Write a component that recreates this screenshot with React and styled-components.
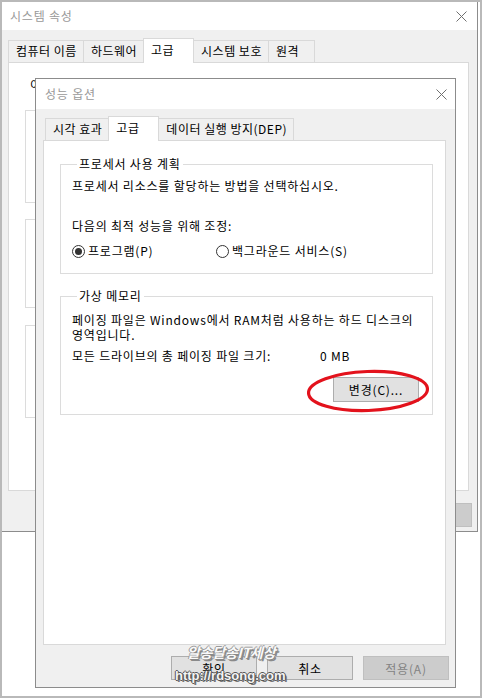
import styled, { createGlobalStyle, css } from 'styled-components'

const GlobalStyle = createGlobalStyle`
  html, body { margin:0; padding:0; background:#fff; }
  body {
    font-family:"Noto Sans CJK KR","Noto Sans",sans-serif;
    font-size:12px;
    letter-spacing:0.8px;
    color:#000;
  }
`

const Desktop = styled.div`
  position:relative;
  width:482px;
  height:698px;
  box-sizing:border-box;
  border:2px solid #b9b9b9;
  background:#fff;
  overflow:hidden;
`

const Window = styled.div`
  box-sizing:border-box;
  display:flex;
  flex-direction:column;
  background:#f0f0f0;
  width:${p => p.$w}px;
  height:${p => p.$h}px;

  ${p => p.$front ? css`
    position:absolute;
    left:33px;
    top:76px;
    border:1px solid #8c8c8c;
  ` : css`
    border-right:1px solid #8c8c8c;
    border-bottom:1px solid #8c8c8c;
  `}
`

const TitleBar = styled.div`
  flex-shrink:0;
  height:${p => p.$h}px;
  background:#fff;
  display:flex;
  align-items:center;
  justify-content:space-between;
  padding:0 ${p => p.$pr}px 0 ${p => p.$pl}px;
  color:#999;
  font-size:12px;
  line-height:16px;
`

const TabArea = styled.div`
  display:flex;
  flex-direction:column;
  padding:${p => p.$pad};
`

const TabStrip = styled.div`
  display:flex;
  align-items:flex-end;
  height:24px;
  padding-left:${p => p.$inset || 0}px;
`

const Tab = styled.div`
  box-sizing:border-box;
  height:22px;
  min-width:47px;
  padding:0 6px 0 7px;
  margin-left:-1px;
  border:1px solid #d9d9d9;
  border-bottom:none;
  background:#f0f0f0;
  line-height:20px;
  letter-spacing:0.5px;
  white-space:nowrap;
  &:first-child { margin-left:0; }

  ${p => p.$active && css`
    position:relative;
    z-index:1;
    height:25px;
    min-width:51px;
    background:#fff;
    margin-bottom:-1px;
    line-height:22px;
  `}
`

const Panel = styled.div`
  box-sizing:border-box;
  background:#fff;
  border:1px solid #d9d9d9;
  width:${p => p.$w}px;
  height:${p => p.$h}px;
  padding:${p => p.$pad};
  display:flex;
  flex-direction:column;
`

const Group = styled.fieldset`
  margin:${p => p.$mt || 0}px 0 0 0;
  padding:0 11px 0 11px;
  border:1px solid #dcdcdc;
  min-width:0;
  ${p => p.$h && css`height:${p.$h}px; box-sizing:border-box;`}

  legend {
    padding:0 2px;
    margin-left:5px;
    line-height:16px;
    font-size:12px;
    white-space:nowrap;
  }
`

const Text = styled.p`
  margin:${p => p.$mt || 0}px 0 0 ${p => p.$ml || 0}px;
  line-height:${p => p.$lh || 16}px;
  white-space:nowrap;
`

const RadioRow = styled.div`
  display:grid;
  grid-template-columns:144px auto;
  margin-top:9px;
  height:16px;
  padding-bottom:14px;
`

const RadioItem = styled.label`
  display:flex;
  align-items:center;
  gap:3px;
  line-height:16px;
`

const RadioDot = styled.span`
  box-sizing:border-box;
  width:13px;
  height:13px;
  border-radius:50%;
  border:1px solid #333;
  display:flex;
  align-items:center;
  justify-content:center;

  &::after {
    content:'';
    width:7px;
    height:7px;
    border-radius:50%;
    background:${p => p.$checked ? '#333' : 'transparent'};
  }
`

const SizeRow = styled.div`
  display:flex;
  margin-top:6px;
  line-height:16px;

  span:first-child { width:248px; }
`

const ActionLine = styled.div`
  display:flex;
  justify-content:flex-end;
  margin:13px 2px 0 0;
  padding-bottom:12px;
`

const Marked = styled.span`
  position:relative;
  display:inline-flex;

  svg {
    position:absolute;
    left:-27px;
    top:-8px;
    pointer-events:none;
  }
`

const Button = styled.button`
  box-sizing:border-box;
  width:86px;
  height:${p => p.$h || 24}px;
  padding:0;
  font-family:"Noto Sans CJK KR","Noto Sans",sans-serif;
  font-size:12px;
  letter-spacing:0.8px;
  color:#000;
  background:#e1e1e1;
  border:1px solid #adadad;

  &:disabled {
    background:#cccccc;
    border-color:#bfbfbf;
    color:#838383;
  }
`

const ButtonRow = styled.div`
  display:flex;
  justify-content:flex-end;
  gap:${p => p.$gap || 9}px;
  padding:${p => p.$pad};
`

const Watermark = styled.div`
  position:absolute;
  left:171px;
  top:641px;
  display:flex;
  flex-direction:column;
  pointer-events:none;
  letter-spacing:0;
`

const MarkTitle = styled.span`
  margin-left:14px;
  font-size:14px;
  font-weight:700;
  font-style:italic;
  line-height:18px;
  color:#fafafa;
  letter-spacing:-0.3px;
  text-shadow:
    1px 1px 0 #8a8a8a, 2px 2px 0 #8a8a8a, -1px 0 0 #9a9a9a, 0 -1px 0 #9a9a9a;
`

const MarkUrl = styled.span`
  margin-top:7px;
  margin-left:2px;
  font-family:"Liberation Sans",Arial,sans-serif;
  font-size:13px;
  font-weight:700;
  line-height:15px;
  color:#f4f4f4;
  text-shadow:
    1px 0 0 #555, -1px 0 0 #555, 0 1px 0 #555, 0 -1px 0 #555,
    2px 2px 0 #777;
`

function CloseIcon() {
  return (
    <svg width="11" height="11" viewBox="0 0 11 11">
      <path d="M0.5 0.5L10.5 10.5M10.5 0.5L0.5 10.5" stroke="#6f6f6f" strokeWidth="1" fill="none" />
    </svg>
  )
}

function SystemProperties() {
  return (
    <Window $w={476} $h={530}>
      <TitleBar $h={28} $pl={8} $pr={10}>
        <span>시스템 속성</span>
        <CloseIcon />
      </TitleBar>
      <TabArea $pad="8px 0 0 6px">
        <TabStrip>
          <Tab>컴퓨터 이름</Tab>
          <Tab>하드웨어</Tab>
          <Tab $active>고급</Tab>
          <Tab>시스템 보호</Tab>
          <Tab>원격</Tab>
        </TabStrip>
        <Panel $w={461} $h={429} $pad="14px 15px 0 16px">
          <Text $ml={5}>이 변경 내용의 대부분을 적용하려면 관리자로 로그온해야 합니다.</Text>
          <Group $mt={9} $h={101}>
            <legend>성능</legend>
            <Text $mt={6}>시각 효과, 프로세서 일정, 메모리 사용 및 가상 메모리</Text>
          </Group>
          <Group $mt={8} $h={97}>
            <legend>사용자 프로필</legend>
            <Text $mt={6}>로그인에 관련된 바탕 화면 설정</Text>
          </Group>
          <Group $mt={9} $h={101}>
            <legend>시작 및 복구</legend>
            <Text $mt={6}>시스템 시작, 시스템 오류 및 디버깅 정보</Text>
          </Group>
        </Panel>
      </TabArea>
      <ButtonRow $pad="12px 5px 0 0">
        <Button>확인</Button>
        <Button>취소</Button>
        <Button disabled>적용(A)</Button>
      </ButtonRow>
    </Window>
  )
}

function PerformanceOptions() {
  return (
    <Window $front $w={421} $h={610}>
      <TitleBar $h={30} $pl={9} $pr={8}>
        <span>성능 옵션</span>
        <CloseIcon />
      </TitleBar>
      <TabArea $pad="7px 9px 0 7px">
        <TabStrip $inset={2}>
          <Tab>시각 효과</Tab>
          <Tab $active>고급</Tab>
          <Tab>데이터 실행 방지(DEP)</Tab>
        </TabStrip>
        <Panel $w={403} $h={505} $pad="15px 12px 0 16px">
          <Group>
            <legend>프로세서 사용 계획</legend>
            <Text $mt={6}>프로세서 리소스를 할당하는 방법을 선택하십시오.</Text>
            <Text $mt={24}>다음의 최적 성능을 위해 조정:</Text>
            <RadioRow>
              <RadioItem><RadioDot $checked />프로그램(P)</RadioItem>
              <RadioItem><RadioDot />백그라운드 서비스(S)</RadioItem>
            </RadioRow>
          </Group>
          <Group $mt={14}>
            <legend>가상 메모리</legend>
            <Text $mt={8} $lh={15}>
              페이징 파일은 Windows에서 RAM처럼 사용하는 하드 디스크의<br />영역입니다.
            </Text>
            <SizeRow>
              <span>모든 드라이브의 총 페이징 파일 크기:</span>
              <span>0 MB</span>
            </SizeRow>
            <ActionLine>
              <Marked>
                <Button $h={25}>변경(C)...</Button>
                <svg width="124" height="44" viewBox="0 0 124 44">
                  <ellipse cx="62" cy="22" rx="59.5" ry="19.5" fill="none" stroke="#e3121c" strokeWidth="3.2" transform="rotate(-2 62 22)" />
                </svg>
              </Marked>
            </ActionLine>
          </Group>
        </Panel>
      </TabArea>
      <ButtonRow $gap={10} $pad="11px 6px 0 0">
        <Button>확인</Button>
        <Button>취소</Button>
        <Button disabled>적용(A)</Button>
      </ButtonRow>
    </Window>
  )
}

export default function App() {
  return (
    <>
      <GlobalStyle />
      <Desktop>
        <SystemProperties />
        <PerformanceOptions />
        <Watermark>
          <MarkTitle>알송달송IT세상</MarkTitle>
          <MarkUrl>http://rdsong.com</MarkUrl>
        </Watermark>
      </Desktop>
    </>
  )
}
